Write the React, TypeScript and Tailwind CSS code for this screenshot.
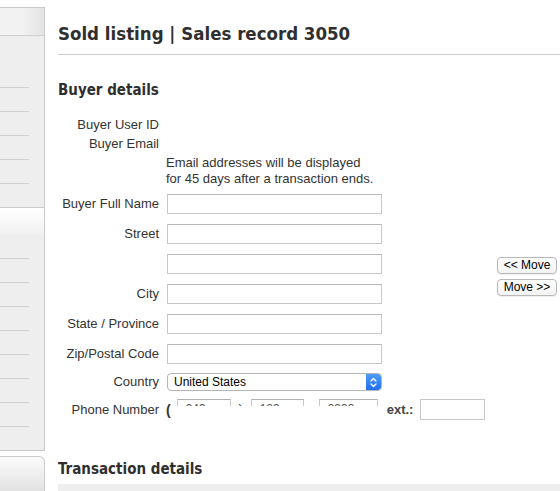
const label = 'w-[101px] shrink-0 text-right text-[13px] leading-[20px] text-[#333]'
const input = 'h-[20px] w-[215px] border border-[#c8c8c8] border-t-[#b8b8b8] bg-white'
const heading = { fontFamily: '"DejaVu Sans Condensed", "DejaVu Sans", sans-serif' }

function SideLines({ count }: { count: number }) {
  return (
    <>
      {Array.from({ length: count }).map((_, i) => (
        <div key={i} className="flex h-[24px] items-end">
          <div className="h-px w-[29px] bg-[#cfcfcf]" />
        </div>
      ))}
    </>
  )
}

function Sidebar() {
  return (
    <aside className="flex w-[45px] shrink-0 flex-col pt-[7px]">
      <div className="border-t border-r border-[#cacaca] bg-[#eeeeee]">
        <div className="h-[28px] border-b border-[#cfcfcf] bg-gradient-to-r from-[#f2f2f2] via-[#f2f2f2] to-[#e4e4e4]" />
        <div className="flex h-[171px] flex-col pt-[28px]">
          <SideLines count={5} />
        </div>
      </div>
      <div className="border-t border-r border-b border-[#cacaca] bg-[#eeeeee]">
        <div className="h-[27px] bg-gradient-to-b from-white to-[#f0f0f0]" />
        <div className="flex h-[215px] flex-col">
          <SideLines count={8} />
        </div>
      </div>
      <div className="mt-[5px] h-[40px] rounded-tr-[6px] border-t border-r border-[#cacaca] bg-gradient-to-b from-[#fbfbfb] to-[#e2e2e2]" />
    </aside>
  )
}

function Row({ name, className = '', children }: { name: string; className?: string; children?: React.ReactNode }) {
  return (
    <div className={`flex items-center gap-2 ${className}`}>
      <div className={label}>{name}</div>
      {children}
    </div>
  )
}

function CountrySelect() {
  return (
    <div className="flex h-[18px] w-[215px] items-center overflow-hidden rounded-[4px] border border-[#b5b5b5] bg-white">
      <span className="flex-1 pl-[6px] text-[12px] leading-[16px] text-black">United States</span>
      <div className="flex h-full w-[15px] items-center justify-center rounded-r-[3px] bg-gradient-to-b from-[#4e9bfb] to-[#1f6ff3]">
        <svg width="7" height="11" viewBox="0 0 7 11" fill="none" stroke="white" strokeWidth="1.3" strokeLinecap="round" strokeLinejoin="round">
          <path d="M1 4 L3.5 1.5 L6 4" />
          <path d="M1 7 L3.5 9.5 L6 7" />
        </svg>
      </div>
    </div>
  )
}

function PhoneRow() {
  const ph = 'h-[20px] border border-[#c8c8c8] border-t-[#b0b0b0] bg-white pl-[8px] text-[12px] leading-[18px] text-[#555]'
  return (
    <div className="mt-[8px] flex items-start gap-2">
      <div className={`${label} pt-px`}>Phone Number</div>
      <div className="-ml-[1px] flex items-start">
        <span className="pt-px text-[14px] font-bold leading-[20px] text-[#333]">(</span>
        {/* the number itself is blanked out in the source; only the top strip of the boxes shows */}
        <div className="ml-[6px] flex h-[7px] items-start overflow-hidden">
          <div className={`${ph} w-[54px]`}>949</div>
          <span className="w-[20px] text-center text-[13px] leading-[20px] text-[#333]">)</span>
          <div className={`${ph} w-[53px]`}>123</div>
          <span className="w-[15px] text-center text-[13px] leading-[20px] text-[#333]">-</span>
          <div className={`${ph} w-[59px]`}>3333</div>
        </div>
        <span className="ml-[9px] pt-px text-[13px] font-bold leading-[20px] text-[#444]">ext.:</span>
        <div className="ml-[7px] h-[21px] w-[65px] border border-[#c8c8c8] bg-white" />
      </div>
    </div>
  )
}

function MoveButton({ text }: { text: string }) {
  return (
    <button
      type="button"
      className="flex h-[17px] w-[60px] items-center justify-center rounded-[4px] border border-[#b8b8b8] bg-gradient-to-b from-white to-[#f3f3f3] text-[12px] leading-[15px] text-black shadow-[0_1px_0_rgba(0,0,0,0.06)]"
    >
      {text}
    </button>
  )
}

export default function App() {
  return (
    <div
      className="flex h-[491px] w-[560px] overflow-hidden bg-white text-[#333]"
      style={{ fontFamily: '"Liberation Sans", Arial, sans-serif' }}
    >
      <Sidebar />
      <main className="flex-1 pl-[13px]">
        <h1
          className="mt-[22px] border-b border-[#cccccc] pb-[8px] text-[18.5px] font-bold leading-[24px] text-[#2f2f2f]"
          style={heading}
        >
          Sold listing | Sales record 3050
        </h1>
        <h2 className="mt-[25px] text-[15px] font-bold leading-[20px] text-[#2f2f2f]" style={heading}>
          Buyer details
        </h2>

        <div className="mt-[15px] flex">
          <div className="flex w-[430px] flex-col">
            <Row name="Buyer User ID" className="h-[19px]" />
            <Row name="Buyer Email" className="h-[19px]" />
            <p className="ml-[108px] mt-[2px] text-[13px] leading-[16px] text-[#333]">
              Email addresses will be displayed
              <br />
              for 45 days after a transaction ends.
            </p>
            <Row name="Buyer Full Name" className="mt-[7px]">
              <div className={input} />
            </Row>
            <Row name="Street" className="mt-[10px]">
              <div className={input} />
            </Row>
            <Row name="" className="mt-[10px]">
              <div className={input} />
            </Row>
            <Row name="City" className="mt-[10px]">
              <div className={input} />
            </Row>
            <Row name="State / Province" className="mt-[10px]">
              <div className={input} />
            </Row>
            <Row name="Zip/Postal Code" className="mt-[10px]">
              <div className={input} />
            </Row>
            <Row name="Country" className="mt-[9px] h-[18px]">
              <CountrySelect />
            </Row>
            <PhoneRow />
          </div>
          <div className="ml-auto mr-[3px] mt-[142px] flex flex-col gap-[5px]">
            <MoveButton text="<< Move" />
            <MoveButton text="Move >>" />
          </div>
        </div>

        <h2 className="mt-[39px] text-[15px] font-bold leading-[20px] text-[#2f2f2f]" style={heading}>
          Transaction details
        </h2>
        <div className="mt-[5px] h-[20px] bg-[#eeeeee]" />
      </main>
    </div>
  )
}
